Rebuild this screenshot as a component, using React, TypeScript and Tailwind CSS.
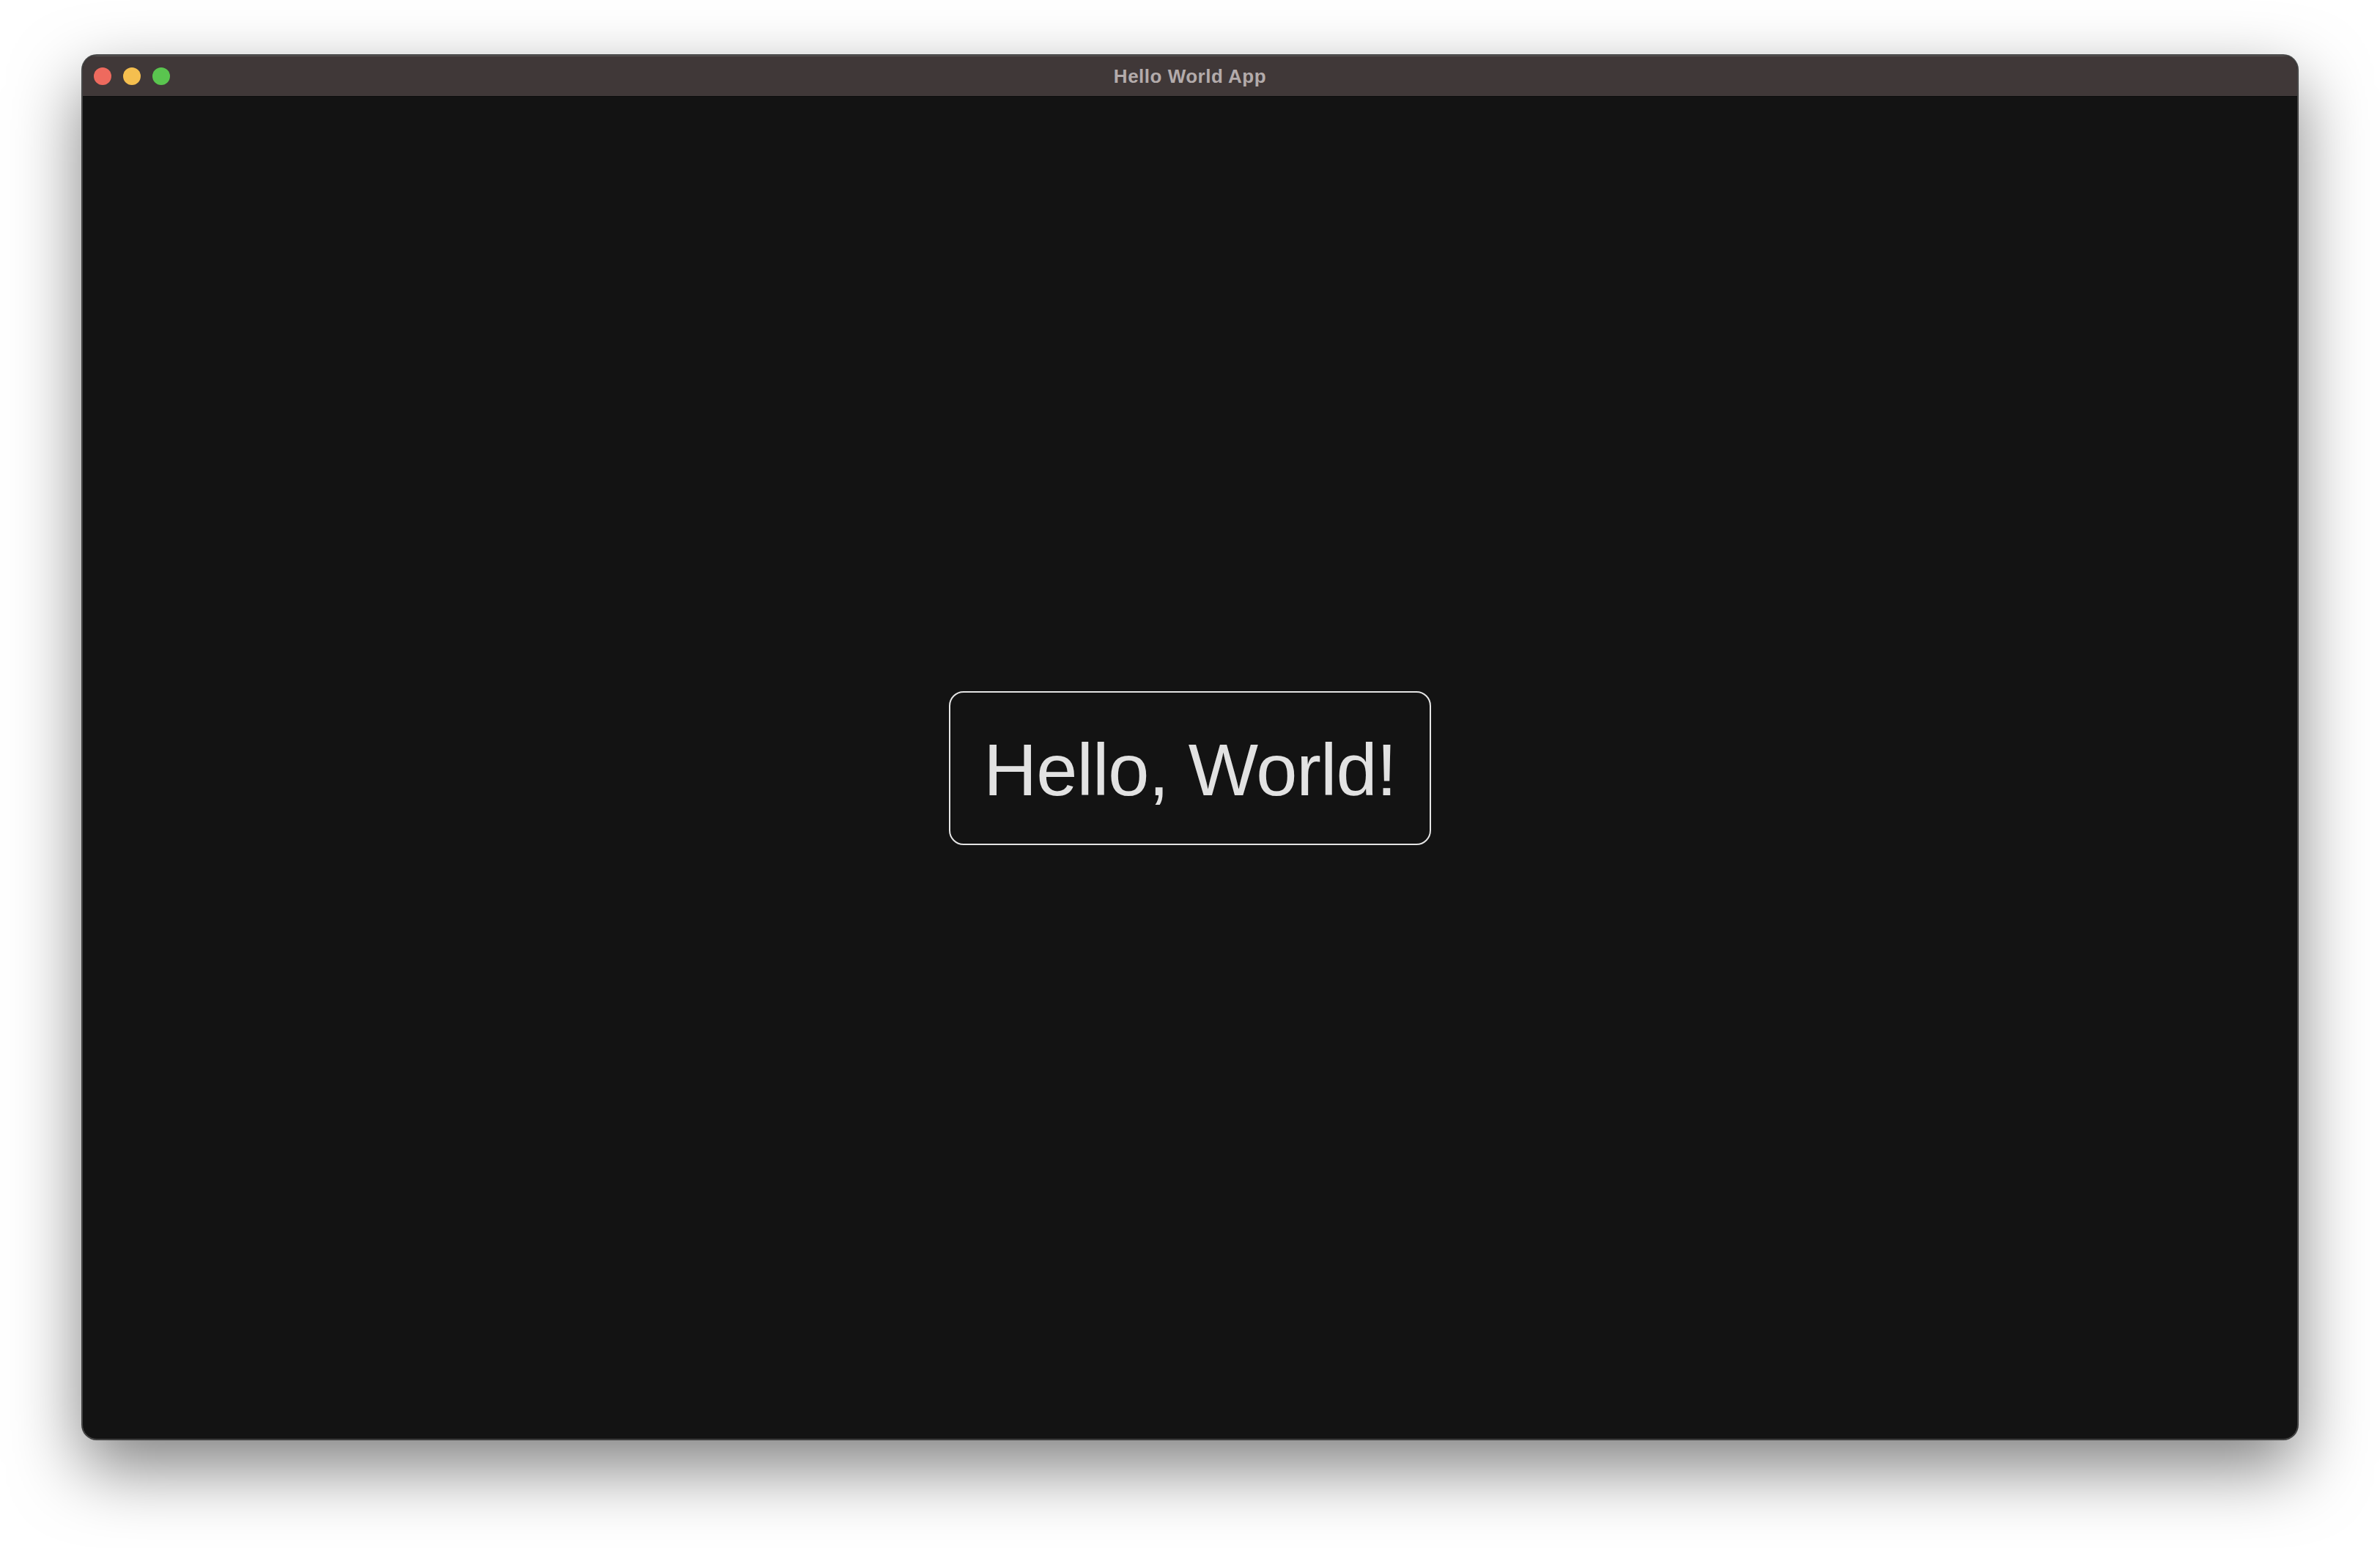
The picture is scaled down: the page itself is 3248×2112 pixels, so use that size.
import React from "react";

export default function App() {
  return (
    <div className="w-[3248px] h-[2112px] bg-white pt-[75px] px-[112px] overflow-hidden">
      <div className="w-[3024px] h-[1889px] rounded-[20px] border border-[#4a4a4a] bg-[#131313] overflow-hidden flex flex-col shadow-[0_0_0_1px_rgba(0,0,0,0.7),0_38px_95px_rgba(0,0,0,0.5)]">
        <div className="relative h-[56px] shrink-0 bg-[#403838] border-b border-[#0c0c0c] flex items-center justify-center shadow-[inset_0_1px_0_rgba(255,255,255,0.12)]">
          <div className="absolute left-[15px] top-[16px] flex gap-[16px]">
            <div className="w-[24px] h-[24px] rounded-full bg-[#ee6a5e]" />
            <div className="w-[24px] h-[24px] rounded-full bg-[#f5bf4f]" />
            <div className="w-[24px] h-[24px] rounded-full bg-[#5ac54f]" />
          </div>
          <span
            className="text-[26px] font-bold tracking-[0.5px] text-[#b3abab] leading-none"
            style={{ fontFamily: '"Liberation Sans", Arial, sans-serif' }}
          >
            Hello World App
          </span>
        </div>
        <div className="flex-1 flex items-center justify-center">
          <div className="w-[658px] h-[210px] rounded-[20px] border-2 border-[#e4e4e4] flex items-center justify-center pt-[5px]">
            <span
              className="text-[101px] leading-none tracking-[-1px] text-[#e2e2e2]"
              style={{ fontFamily: '"Liberation Sans", Arial, sans-serif' }}
            >
              Hello, World!
            </span>
          </div>
        </div>
      </div>
    </div>
  );
}
